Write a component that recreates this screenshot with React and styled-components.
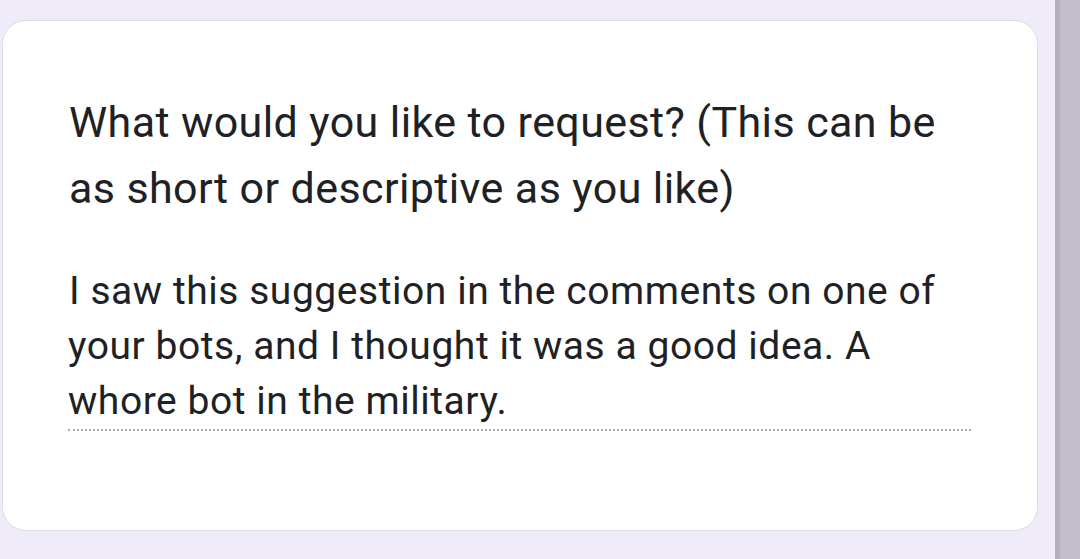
import React from 'react';
import styled, { createGlobalStyle } from 'styled-components';

const GlobalStyle = createGlobalStyle`
  html, body {
    margin: 0;
    padding: 0;
    background: #f0ebf8;
  }
  body {
    font-family: Roboto, "Noto Sans", Arial, sans-serif;
    color: #202124;
  }
`;

const Page = styled.div`
  display: flex;
  width: 1080px;
  height: 559px;
  overflow: hidden;
  background: #f0ebf8;
`;

const Main = styled.main`
  flex: 1;
  padding: 20px 17px 28px 2px;
`;

const Card = styled.section`
  box-sizing: border-box;
  height: 511px;
  background: #fff;
  border: 1px solid #dadce0;
  border-radius: 24px;
  padding: 68px 66px 0 65px;
`;

const Question = styled.h2`
  margin: 0 0 0 1px;
  font-size: 43px;
  font-weight: 400;
  line-height: 66px;
  letter-spacing: 0.4px;
  max-width: 890px;
`;

const Answer = styled.div`
  margin-top: 43px;
  width: 903px;
  border-bottom: 2px dotted #a8acb0;
  font-size: 39px;
  line-height: 55px;
  letter-spacing: 0.55px;
  text-indent: 1px;
`;

const Scrollbar = styled.div`
  width: 27px;
  height: 100%;
  background: #c2bccb;
  border-left: 5px solid #b6aebf;
  box-sizing: border-box;
`;

export default function App() {
  return (
    <>
      <GlobalStyle />
      <Page>
        <Main>
          <Card>
            <Question>
              What would you like to request? (This can be as short or
              descriptive as you like)
            </Question>
            <Answer>
              I saw this suggestion in the comments on one of your bots, and I
              thought it was a good idea. A whore bot in the military.
            </Answer>
          </Card>
        </Main>
        <Scrollbar />
      </Page>
    </>
  );
}
